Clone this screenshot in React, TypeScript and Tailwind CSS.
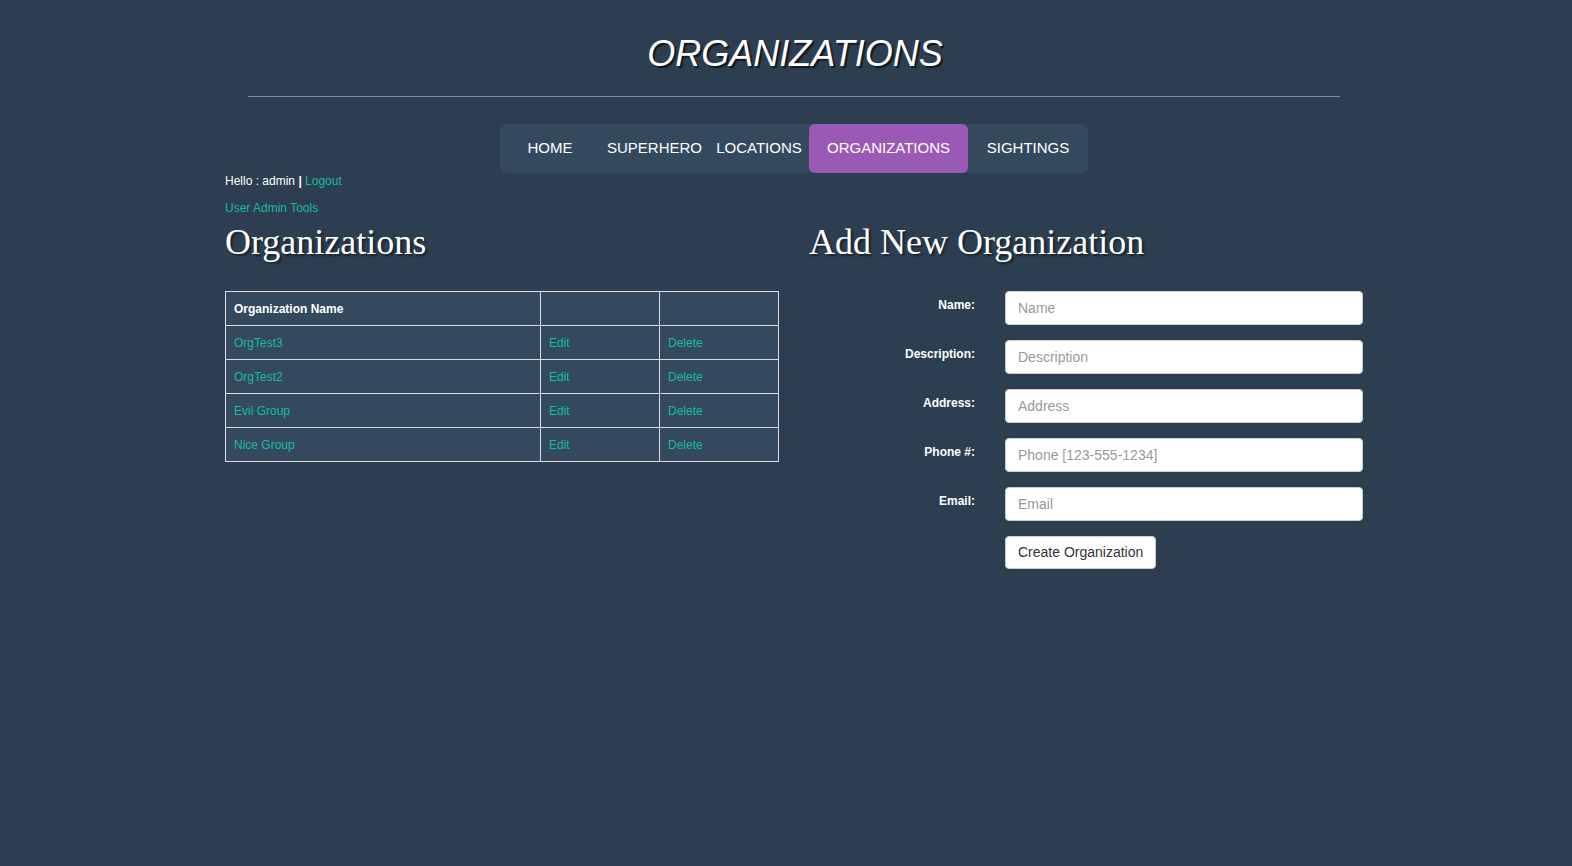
import React from "react";

const NAV_ITEMS = [
  { label: "HOME", w: "w-[100px]", active: false },
  { label: "SUPERHERO", w: "w-[109px]", active: false },
  { label: "LOCATIONS", w: "w-[100px]", active: false },
  { label: "ORGANIZATIONS", w: "w-[159px]", active: true },
  { label: "SIGHTINGS", w: "w-[120px]", active: false },
];

const ORGS = ["OrgTest3", "OrgTest2", "Evil Group", "Nice Group"];

const FIELDS = [
  { label: "Name:", placeholder: "Name" },
  { label: "Description:", placeholder: "Description" },
  { label: "Address:", placeholder: "Address" },
  { label: "Phone #:", placeholder: "Phone [123-555-1234]" },
  { label: "Email:", placeholder: "Email" },
];

export default function App() {
  return (
    <div className="min-h-screen w-full bg-[#2c3e50] text-white font-['Liberation_Sans',Arial,sans-serif]">
      <div className="ml-[210px] w-[1168px] px-[15px]">
        {/* Page title */}
        <div className="pt-[34px] pl-[2px] text-center">
          <h1 className="text-[36px] leading-[40px] italic text-white [text-shadow:2px_2px_1px_rgba(0,0,0,0.6)]">
            ORGANIZATIONS
          </h1>
        </div>
        <div className="mx-[23px] mt-[22px] border-t border-[#8a8a8a]" />

        {/* Nav */}
        <div className="mt-[27px] flex justify-center">
          <ul className="flex h-[49px] rounded-[6px] bg-[#34495e]">
            {NAV_ITEMS.map((item) => (
              <li
                key={item.label}
                className={`${item.w} flex items-center justify-center rounded-[6px] text-[15px] ${
                  item.active ? "bg-[#9b59b6]" : ""
                }`}
              >
                {item.label}
              </li>
            ))}
          </ul>
        </div>

        {/* User line */}
        <p className="text-[12px] leading-[16px]">
          Hello : admin <b>|</b> <a className="text-[#18bc9c]">Logout</a>
        </p>
        <p className="mt-[11px] text-[12px] leading-[16px]">
          <a className="text-[#18bc9c]">User Admin Tools</a>
        </p>

        <div className="mt-[6px] grid grid-cols-2 gap-[30px]">
          {/* Left: list */}
          <div>
            <h2 className="font-['Liberation_Serif',Georgia,serif] text-[36px] leading-[40px] [text-shadow:2px_2px_2px_rgba(0,0,0,0.45)]">
              Organizations
            </h2>
            <table className="mt-[29px] w-[554px] border-collapse text-[12px]">
              <tbody>
                <tr className="h-[34px] bg-[#34495e]">
                  <th className="w-[315px] border border-[#dddddd] px-[8px] text-left font-bold">
                    Organization Name
                  </th>
                  <th className="w-[119px] border border-[#dddddd]" />
                  <th className="w-[119px] border border-[#dddddd]" />
                </tr>
                {ORGS.map((org) => (
                  <tr key={org} className="h-[34px] bg-[#34495e] text-[#18bc9c]">
                    <td className="border border-[#dddddd] px-[8px]">{org}</td>
                    <td className="border border-[#dddddd] px-[8px]">Edit</td>
                    <td className="border border-[#dddddd] px-[8px]">Delete</td>
                  </tr>
                ))}
              </tbody>
            </table>
          </div>

          {/* Right: form */}
          <div>
            <h2 className="font-['Liberation_Serif',Georgia,serif] text-[36px] leading-[40px] [text-shadow:2px_2px_2px_rgba(0,0,0,0.45)]">
              Add New Organization
            </h2>
            <form className="mt-[29px] flex flex-col gap-[15px]">
              {FIELDS.map((f) => (
                <div key={f.label} className="flex">
                  <label className="w-[166px] shrink-0 pt-[6px] text-right text-[12px] leading-[16px] font-bold">
                    {f.label}
                  </label>
                  <input
                    placeholder={f.placeholder}
                    className="ml-[30px] h-[34px] w-[359px] rounded-[4px] border border-[#cccccc] bg-white px-[12px] text-[14px] text-[#333] placeholder:text-[#999] outline-none"
                  />
                </div>
              ))}
              <div className="flex">
                <button
                  type="button"
                  className="ml-[196px] h-[33px] rounded-[4px] border border-[#cccccc] bg-white px-[12px] text-[14px] text-[#333]"
                >
                  Create Organization
                </button>
              </div>
            </form>
          </div>
        </div>
      </div>
    </div>
  );
}
